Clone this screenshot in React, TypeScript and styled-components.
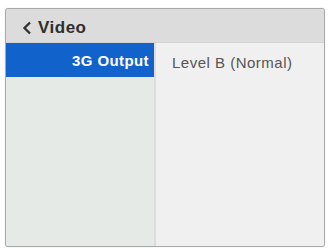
import React from 'react';
import styled, { createGlobalStyle } from 'styled-components';

const GlobalStyle = createGlobalStyle`
  html, body {
    margin: 0;
    padding: 0;
    background: #ffffff;
  }
  body {
    font-family: "Liberation Sans", Arial, sans-serif;
  }
`;

const Page = styled.div`
  width: 329px;
  height: 248px;
  padding: 8px 4px 3px 5px;
  box-sizing: border-box;
`;

const Panel = styled.div`
  height: 100%;
  display: flex;
  flex-direction: column;
  border: 1px solid #a9a9a9;
  border-radius: 3px;
  box-shadow: 0 0 1px rgba(0, 0, 0, 0.25), inset 1px 0 0 #c8c8c8;
  background: #efefef;
  overflow: hidden;
`;

const Header = styled.div`
  height: 34px;
  box-sizing: border-box;
  padding: 5px 0 0 16px;
  display: flex;
  align-items: center;
  gap: 6px;
  background: #dcdcdc;
  border-bottom: 1px solid #d2d2d2;
  color: #2e2e2e;
  font-size: 17px;
  font-weight: bold;
  letter-spacing: 0.5px;
`;

const Body = styled.div`
  flex: 1;
  display: flex;
`;

const Menu = styled.div`
  width: 148px;
  background: #e6eae6;
  border-right: 2px solid #dcdcdc;
`;

const Values = styled.div`
  flex: 1;
  background: #f0f0f0;
`;

const Item = styled.div<{ $active?: boolean }>`
  height: 34px;
  display: flex;
  align-items: center;
  justify-content: flex-end;
  padding-right: 5px;
  background: ${p => (p.$active ? '#1262cc' : 'transparent')};
  color: ${p => (p.$active ? '#ffffff' : '#333333')};
  font-size: 15px;
  font-weight: bold;
  letter-spacing: 0.4px;
`;

const Value = styled.div`
  height: 34px;
  box-sizing: border-box;
  padding: 4px 0 0 16px;
  display: flex;
  align-items: center;
  color: #555555;
  font-size: 15px;
  letter-spacing: 0.5px;
`;

const Chevron = () => (
  <svg width="10" height="14" viewBox="0 0 10 14">
    <path d="M8 1.5 L2.5 7 L8 12.5" fill="none" stroke="#333" strokeWidth="2.4" />
  </svg>
);

const App: React.FC = () => (
  <>
    <GlobalStyle />
    <Page>
      <Panel>
        <Header>
          <Chevron />
          Video
        </Header>
        <Body>
          <Menu>
            <Item $active>3G Output</Item>
          </Menu>
          <Values>
            <Value>Level B (Normal)</Value>
          </Values>
        </Body>
      </Panel>
    </Page>
  </>
);

export default App;
